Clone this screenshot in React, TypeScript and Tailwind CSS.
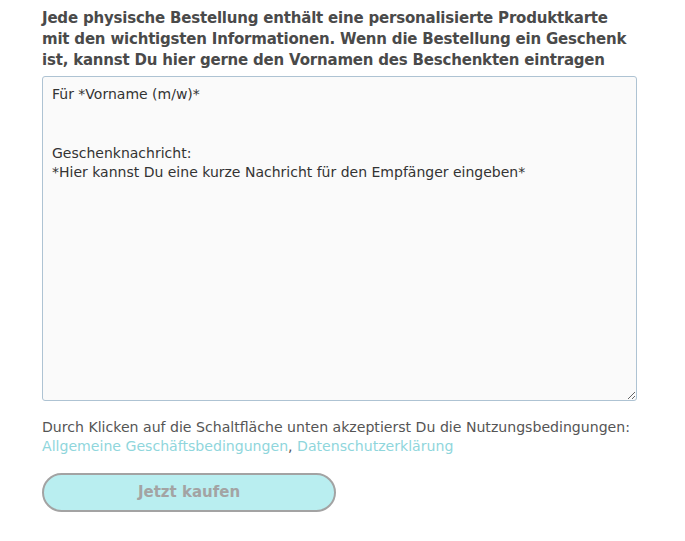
export default function App() {
    return (
        <div className="min-h-screen bg-white" style={{ fontFamily: '"DejaVu Sans", "Open Sans", sans-serif' }}>
            <div className="ml-[42px] w-[595px] pt-[8px]">
                <p className="whitespace-nowrap text-[15px] leading-[21px] font-semibold text-[#4a4a4a] tracking-[-0.2px]">
                    Jede physische Bestellung enthält eine personalisierte Produktkarte
                    <br />
                    mit den wichtigsten Informationen. Wenn die Bestellung ein Geschenk
                    <br />
                    ist, kannst Du hier gerne den Vornamen des Beschenkten eintragen
                </p>
                <textarea
                    className="mt-[5px] block h-[325px] w-full resize-y rounded-[3px] border border-[#aec3d3] bg-[#fafafa] px-[9px] py-[8px] text-[14px] leading-[19.5px] text-[#333] outline-none"
                    defaultValue={"Für *Vorname (m/w)*\n\n\nGeschenknachricht:\n*Hier kannst Du eine kurze Nachricht für den Empfänger eingeben*"}
                />
                <p className="mt-[17px] text-[14.1px] leading-[19px] text-[#555]">
                    Durch Klicken auf die Schaltfläche unten akzeptierst Du die Nutzungsbedingungen:{" "}
                    <a href="#" className="text-[#8fd6dc]">Allgemeine Geschäftsbedingungen</a>,{" "}
                    <a href="#" className="text-[#8fd6dc]">Datenschutzerklärung</a>
                </p>
                <button className="mt-[17px] h-[39px] w-[294px] rounded-full border-2 border-[#a3a3a3] bg-[#b9eef0] text-[15px] font-bold text-[#a3a3a3]">
                    Jetzt kaufen
                </button>
            </div>
        </div>
    );
}
